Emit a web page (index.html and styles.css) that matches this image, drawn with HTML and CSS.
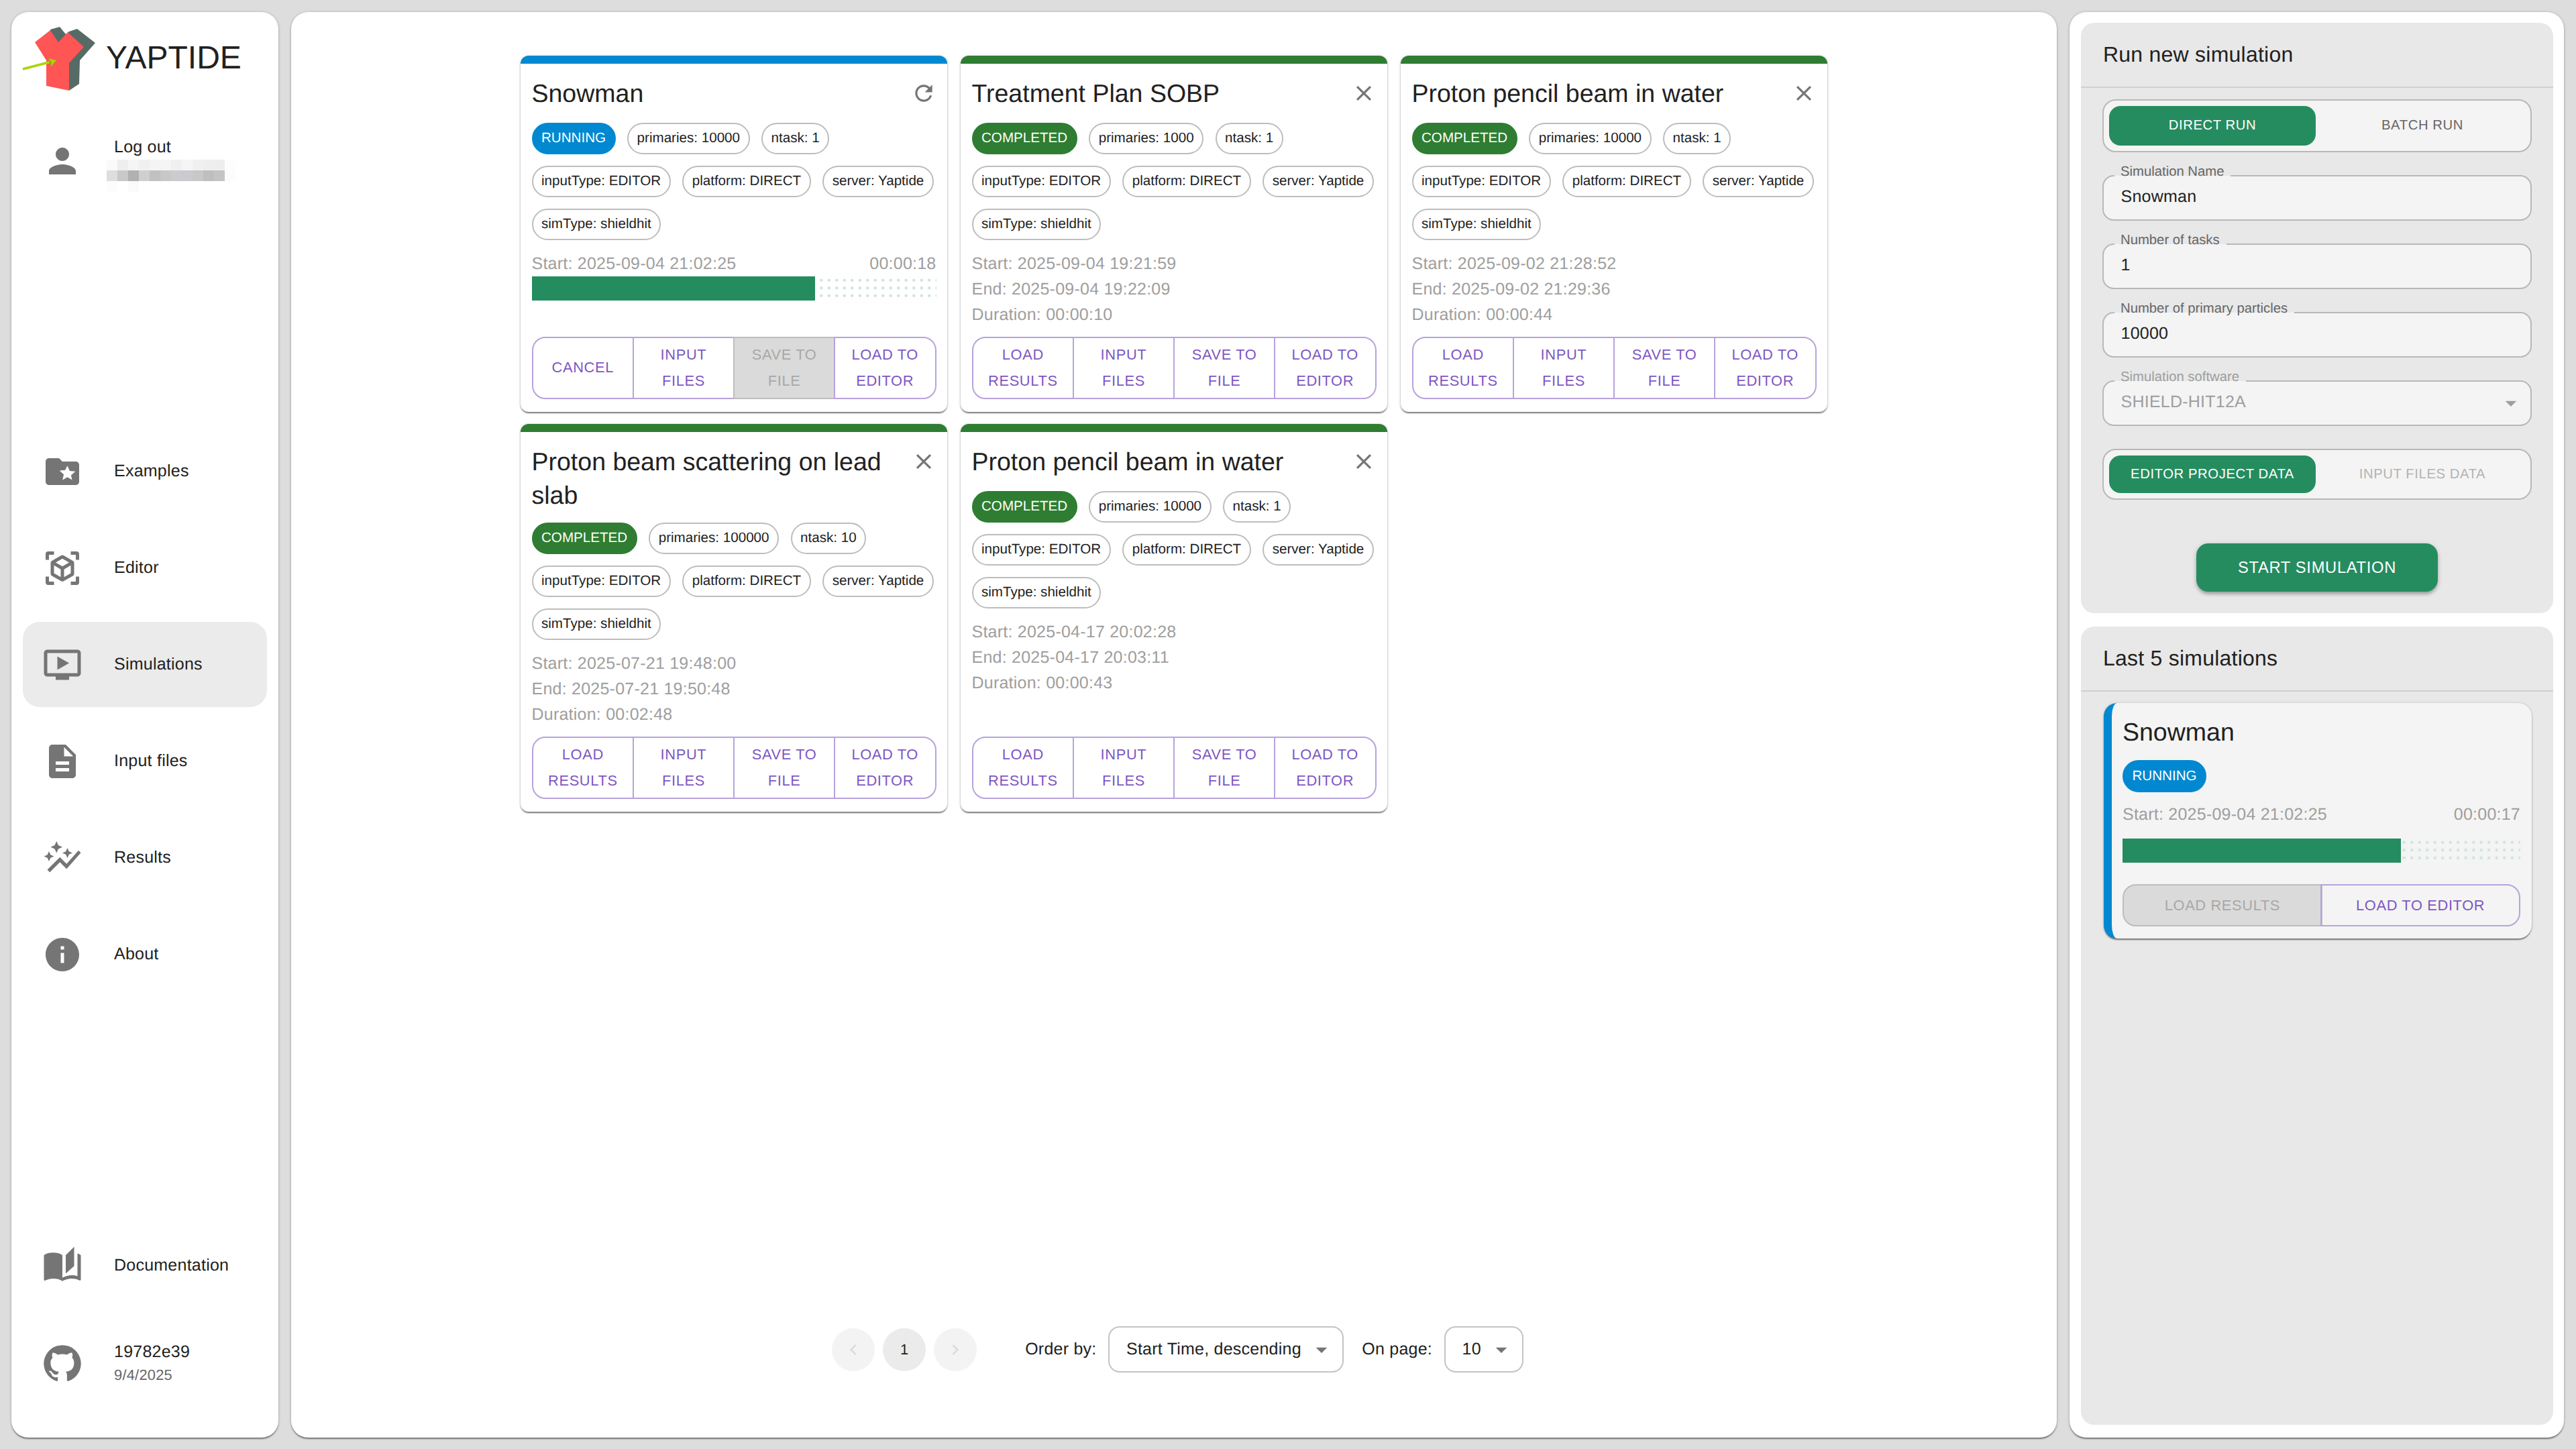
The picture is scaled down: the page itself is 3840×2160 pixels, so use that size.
FILE: index.html
```html
<!DOCTYPE html>
<html lang="en">
<head>
  <meta charset="UTF-8" />
  <title>YAPTIDE</title>
  <link rel="stylesheet" href="styles.css">
</head>
<body>
  <div class="app">

    <aside class="side">
      <div class="side-top">
        <div class="brand">
          <svg class="logo" viewBox="30 36 115 104">
            <polygon fill="#566b66" points="75,44 89,40 98,51 103,47 115,43 142,64 119,90 118,125 103,135 90,100 75,50" />
            <polygon fill="#ff5555" points="52,63 75,45 87,63 101,48 125,70 103,94 103,135 69,128 69,90" />
            <line x1="34" y1="103" x2="76" y2="92" stroke="#a8d600" stroke-width="3.5" />
            <polygon fill="#a8d600" points="72,87 84,90 76,99" />
            <polygon fill="#7f9e00" points="72,87 76,92 76,99" />
          </svg>
          <span class="brand-name">YAPTIDE</span>
        </div>
        <a class="nav-item user-item">
          <svg class="nav-icon" viewBox="0 0 24 24"><path d="M12 12c2.21 0 4-1.79 4-4s-1.79-4-4-4-4 1.79-4 4 1.79 4 4 4zm0 2c-2.67 0-8 1.34-8 4v2h16v-2c0-2.66-5.33-4-8-4z" /></svg>
          <div class="nav-text">
            <div>Log out</div>
            <svg class="mosaic" viewBox="0 0 12 3" shape-rendering="crispEdges">
              <rect x="0" y="0" width="1" height="1" fill="#fafafa" /><rect x="1" y="0" width="1" height="1" fill="#eeeeee" /><rect x="2" y="0" width="1" height="1" fill="#f5f5f5" /><rect x="3" y="0" width="1" height="1" fill="#f0f0f0" /><rect x="4" y="0" width="1" height="1" fill="#f4f4f4" /><rect x="5" y="0" width="1" height="1" fill="#f5f5f5" /><rect x="6" y="0" width="1" height="1" fill="#f0f0f0" /><rect x="7" y="0" width="1" height="1" fill="#f5f5f5" /><rect x="8" y="0" width="1" height="1" fill="#f0f0f0" /><rect x="9" y="0" width="1" height="1" fill="#eeeeee" /><rect x="10" y="0" width="1" height="1" fill="#eeeeee" /><rect x="11" y="0" width="1" height="1" fill="#fdfdfd" />
              <rect x="0" y="1" width="1" height="1" fill="#dfdedd" /><rect x="1" y="1" width="1" height="1" fill="#c8caca" /><rect x="2" y="1" width="1" height="1" fill="#b1b1b1" /><rect x="3" y="1" width="1" height="1" fill="#d0cfcc" /><rect x="4" y="1" width="1" height="1" fill="#c2c0c1" /><rect x="5" y="1" width="1" height="1" fill="#c8c8c8" /><rect x="6" y="1" width="1" height="1" fill="#cccccc" /><rect x="7" y="1" width="1" height="1" fill="#c9cbd0" /><rect x="8" y="1" width="1" height="1" fill="#c8c8c8" /><rect x="9" y="1" width="1" height="1" fill="#c0bfbf" /><rect x="10" y="1" width="1" height="1" fill="#c4c4c4" /><rect x="11" y="1" width="1" height="1" fill="#fbfcfd" />
              <rect x="0" y="2" width="1" height="1" fill="#fcfcfc" /><rect x="2" y="2" width="1" height="1" fill="#fafafa" />
            </svg>
          </div>
        </a>
      </div>

      <nav class="nav-group">
        <a class="nav-item">
          <svg class="nav-icon" viewBox="0 0 24 24"><path d="M20 6h-8l-2-2H4c-1.1 0-1.99.9-1.99 2L2 18c0 1.1.9 2 2 2h16c1.1 0 2-.9 2-2V8c0-1.1-.9-2-2-2zm-2.06 11L15 15.28 12.06 17l.78-3.33-2.59-2.24 3.41-.29L15 8.5l1.34 3.14 3.41.29-2.59 2.24.78 3.33z" /></svg>
          <span>Examples</span>
        </a>
        <a class="nav-item">
          <svg class="nav-icon" viewBox="0 0 24 24"><path d="M18.25 7.6l-5.5-3.18c-.46-.27-1.04-.27-1.5 0L5.75 7.6c-.46.27-.75.76-.75 1.3v6.35c0 .54.29 1.03.75 1.3l5.5 3.18c.46.27 1.04.27 1.5 0l5.5-3.18c.46-.27.75-.76.75-1.3V8.9c0-.54-.29-1.03-.75-1.3zM7 14.96v-4.62l4 2.32v4.61l-4-2.31zm5-4.03L8 8.61l4-2.31 4 2.31-4 2.32zm1 6.34v-4.61l4-2.32v4.62l-4 2.31zM7 2H3.5C2.67 2 2 2.67 2 3.5V7h2V4h3V2zm10 0h3.5c.83 0 1.5.67 1.5 1.5V7h-2V4h-3V2zM7 22H3.5c-.83 0-1.5-.67-1.5-1.5V17h2v3h3v2zm10 0h3.5c.83 0 1.5-.67 1.5-1.5V17h-2v3h-3v2z" /></svg>
          <span>Editor</span>
        </a>
        <a class="nav-item active">
          <svg class="nav-icon" viewBox="0 0 24 24"><path d="M21 3H3c-1.11 0-2 .89-2 2v12c0 1.1.89 2 2 2h5v2h8v-2h5c1.1 0 1.99-.9 1.99-2L23 5c0-1.11-.9-2-2-2zm0 14H3V5h18v12zm-5-6l-7 4V7z" /></svg>
          <span>Simulations</span>
        </a>
        <a class="nav-item">
          <svg class="nav-icon" viewBox="0 0 24 24"><path d="M14 2H6c-1.1 0-1.99.9-1.99 2L4 20c0 1.1.89 2 1.99 2H18c1.1 0 2-.9 2-2V8l-6-6zm2 16H8v-2h8v2zm0-4H8v-2h8v2zm-3-5V3.5L18.5 9H13z" /></svg>
          <span>Input files</span>
        </a>
        <a class="nav-item">
          <svg class="nav-icon" viewBox="0 0 24 24"><path d="M14.06 9.94 12 9l2.06-.94L15 6l.94 2.06L18 9l-2.06.94L15 12l-.94-2.06zM4 14l.94-2.06L7 11l-2.06-.94L4 8l-.94 2.06L1 11l2.06.94L4 14zm4.5-5 1.09-2.41L12 5.5l-2.41-1.09L8.5 2 7.41 4.41 5 5.5l2.41 1.09L8.5 9zm-4 11.5 6-6.01 4 4L23 8.93l-1.41-1.41-7.09 7.97-4-4L3 19l1.5 1.5z" /></svg>
          <span>Results</span>
        </a>
        <a class="nav-item">
          <svg class="nav-icon" viewBox="0 0 24 24"><path d="M12 2C6.48 2 2 6.48 2 12s4.48 10 10 10 10-4.48 10-10S17.52 2 12 2zm1 15h-2v-6h2v6zm0-8h-2V7h2v2z" /></svg>
          <span>About</span>
        </a>
      </nav>

      <nav class="nav-group nav-bottom">
        <a class="nav-item">
          <svg class="nav-icon" viewBox="0 0 24 24"><path d="M19 1l-5 5v11l5-4.5V1zM1 6v14.65c0 .25.25.5.5.5.1 0 .15-.05.25-.05C3.1 20.45 5.05 20 6.5 20c1.95 0 4.05.4 5.5 1.5V6c-1.45-1.1-3.55-1.5-5.5-1.5S2.45 4.9 1 6zm22 13.5V6c-.6-.45-1.25-.75-2-1v13.5c-1.1-.35-2.3-.5-3.5-.5-1.7 0-4.15.65-5.5 1.5v2c1.35-.85 3.8-1.5 5.5-1.5 1.65 0 3.35.3 4.75 1.05.1.05.15.05.25.05.25 0 .5-.25.5-.5v-1.1z" /></svg>
          <span>Documentation</span>
        </a>
        <a class="nav-item">
          <svg class="nav-icon" viewBox="0 0 24 24"><path d="M12 1.27a11 11 0 00-3.48 21.46c.55.09.73-.28.73-.55v-1.84c-3.03.64-3.67-1.46-3.67-1.46-.55-1.29-1.28-1.65-1.28-1.65-.92-.65.1-.65.1-.65 1.1 0 1.73 1.1 1.73 1.1.92 1.65 2.57 1.2 3.21.92a2 2 0 01.64-1.47c-2.47-.27-5.04-1.19-5.04-5.5 0-1.1.46-2.1 1.2-2.84a3.76 3.76 0 010-2.93s.91-.28 3.11 1.1c1.8-.49 3.7-.49 5.5 0 2.1-1.38 3.02-1.1 3.02-1.1a3.76 3.76 0 010 2.93c.83.74 1.2 1.74 1.2 2.94 0 4.21-2.57 5.13-5.04 5.4.45.37.82.92.82 2.02v3.03c0 .27.1.64.73.55A11 11 0 0012 1.27" /></svg>
          <div class="nav-text">
            <div>19782e39</div>
            <div class="nav-sub">9/4/2025</div>
          </div>
        </a>
      </nav>
    </aside>

    <main class="main">
      <section class="cards">

        <article class="card card-running">
          <header class="card-head">
            <h2 class="card-title">Snowman</h2>
            <svg class="card-action" viewBox="0 0 24 24"><path d="M17.65 6.35C16.2 4.9 14.21 4 12 4c-4.42 0-7.99 3.58-7.99 8s3.57 8 7.99 8c3.73 0 6.84-2.55 7.73-6h-2.08c-.82 2.33-3.04 4-5.65 4-3.31 0-6-2.69-6-6s2.69-6 6-6c1.66 0 3.14.69 4.22 1.78L13 11h7V4z" /></svg>
          </header>
          <div class="chips">
            <span class="chip chip-blue">RUNNING</span>
            <span class="chip">primaries: 10000</span>
            <span class="chip">ntask: 1</span>
            <span class="chip">inputType: EDITOR</span>
            <span class="chip">platform: DIRECT</span>
            <span class="chip">server: Yaptide</span>
            <span class="chip">simType: shieldhit</span>
          </div>
          <div class="meta meta-row"><span>Start: 2025-09-04 21:02:25</span><span>00:00:18</span></div>
          <div class="progress"><div class="progress-fill" style="width: 70%"></div></div>
          <div class="btn-group">
            <button class="btn">CANCEL</button>
            <button class="btn">INPUT FILES</button>
            <button class="btn" disabled>SAVE TO FILE</button>
            <button class="btn">LOAD TO EDITOR</button>
          </div>
        </article>

        <article class="card">
          <header class="card-head">
            <h2 class="card-title">Treatment Plan SOBP</h2>
            <svg class="card-action" viewBox="0 0 24 24"><path d="M19 6.41 17.59 5 12 10.59 6.41 5 5 6.41 10.59 12 5 17.59 6.41 19 12 13.41 17.59 19 19 17.59 13.41 12z" /></svg>
          </header>
          <div class="chips">
            <span class="chip chip-green">COMPLETED</span>
            <span class="chip">primaries: 1000</span>
            <span class="chip">ntask: 1</span>
            <span class="chip">inputType: EDITOR</span>
            <span class="chip">platform: DIRECT</span>
            <span class="chip">server: Yaptide</span>
            <span class="chip">simType: shieldhit</span>
          </div>
          <div class="meta">
            <div>Start: 2025-09-04 19:21:59</div>
            <div>End: 2025-09-04 19:22:09</div>
            <div>Duration: 00:00:10</div>
          </div>
          <div class="btn-group">
            <button class="btn">LOAD RESULTS</button>
            <button class="btn">INPUT FILES</button>
            <button class="btn">SAVE TO FILE</button>
            <button class="btn">LOAD TO EDITOR</button>
          </div>
        </article>

        <article class="card">
          <header class="card-head">
            <h2 class="card-title">Proton pencil beam in water</h2>
            <svg class="card-action" viewBox="0 0 24 24"><path d="M19 6.41 17.59 5 12 10.59 6.41 5 5 6.41 10.59 12 5 17.59 6.41 19 12 13.41 17.59 19 19 17.59 13.41 12z" /></svg>
          </header>
          <div class="chips">
            <span class="chip chip-green">COMPLETED</span>
            <span class="chip">primaries: 10000</span>
            <span class="chip">ntask: 1</span>
            <span class="chip">inputType: EDITOR</span>
            <span class="chip">platform: DIRECT</span>
            <span class="chip">server: Yaptide</span>
            <span class="chip">simType: shieldhit</span>
          </div>
          <div class="meta">
            <div>Start: 2025-09-02 21:28:52</div>
            <div>End: 2025-09-02 21:29:36</div>
            <div>Duration: 00:00:44</div>
          </div>
          <div class="btn-group">
            <button class="btn">LOAD RESULTS</button>
            <button class="btn">INPUT FILES</button>
            <button class="btn">SAVE TO FILE</button>
            <button class="btn">LOAD TO EDITOR</button>
          </div>
        </article>

        <article class="card">
          <header class="card-head">
            <h2 class="card-title">Proton beam scattering on lead slab</h2>
            <svg class="card-action" viewBox="0 0 24 24"><path d="M19 6.41 17.59 5 12 10.59 6.41 5 5 6.41 10.59 12 5 17.59 6.41 19 12 13.41 17.59 19 19 17.59 13.41 12z" /></svg>
          </header>
          <div class="chips">
            <span class="chip chip-green">COMPLETED</span>
            <span class="chip">primaries: 100000</span>
            <span class="chip">ntask: 10</span>
            <span class="chip">inputType: EDITOR</span>
            <span class="chip">platform: DIRECT</span>
            <span class="chip">server: Yaptide</span>
            <span class="chip">simType: shieldhit</span>
          </div>
          <div class="meta">
            <div>Start: 2025-07-21 19:48:00</div>
            <div>End: 2025-07-21 19:50:48</div>
            <div>Duration: 00:02:48</div>
          </div>
          <div class="btn-group">
            <button class="btn">LOAD RESULTS</button>
            <button class="btn">INPUT FILES</button>
            <button class="btn">SAVE TO FILE</button>
            <button class="btn">LOAD TO EDITOR</button>
          </div>
        </article>

        <article class="card">
          <header class="card-head">
            <h2 class="card-title">Proton pencil beam in water</h2>
            <svg class="card-action" viewBox="0 0 24 24"><path d="M19 6.41 17.59 5 12 10.59 6.41 5 5 6.41 10.59 12 5 17.59 6.41 19 12 13.41 17.59 19 19 17.59 13.41 12z" /></svg>
          </header>
          <div class="chips">
            <span class="chip chip-green">COMPLETED</span>
            <span class="chip">primaries: 10000</span>
            <span class="chip">ntask: 1</span>
            <span class="chip">inputType: EDITOR</span>
            <span class="chip">platform: DIRECT</span>
            <span class="chip">server: Yaptide</span>
            <span class="chip">simType: shieldhit</span>
          </div>
          <div class="meta">
            <div>Start: 2025-04-17 20:02:28</div>
            <div>End: 2025-04-17 20:03:11</div>
            <div>Duration: 00:00:43</div>
          </div>
          <div class="btn-group">
            <button class="btn">LOAD RESULTS</button>
            <button class="btn">INPUT FILES</button>
            <button class="btn">SAVE TO FILE</button>
            <button class="btn">LOAD TO EDITOR</button>
          </div>
        </article>

      </section>

      <footer class="pager">
        <div class="pages">
          <span class="page page-off"><svg viewBox="0 0 24 24"><path d="M15.41 7.41 14 6l-6 6 6 6 1.41-1.41L10.83 12z" /></svg></span>
          <span class="page page-on">1</span>
          <span class="page page-off"><svg viewBox="0 0 24 24"><path d="M10 6 8.59 7.41 13.17 12l-4.58 4.59L10 18l6-6z" /></svg></span>
        </div>
        <span class="pager-label first-label">Order by:</span>
        <div class="pager-select">
          <span>Start Time, descending</span>
          <svg class="drop" viewBox="0 0 24 24"><path d="M7 10l5 5 5-5z" /></svg>
        </div>
        <span class="pager-label">On page:</span>
        <div class="pager-select">
          <span>10</span>
          <svg class="drop" viewBox="0 0 24 24"><path d="M7 10l5 5 5-5z" /></svg>
        </div>
      </footer>
    </main>

    <aside class="right">
      <section class="box box-run">
        <h3 class="box-title">Run new simulation</h3>
        <div class="box-body">
          <div class="toggle">
            <span class="toggle-opt on">DIRECT RUN</span>
            <span class="toggle-opt">BATCH RUN</span>
          </div>
          <div class="field">
            <label class="field-label">Simulation Name</label>
            <span>Snowman</span>
          </div>
          <div class="field">
            <label class="field-label">Number of tasks</label>
            <span>1</span>
          </div>
          <div class="field">
            <label class="field-label">Number of primary particles</label>
            <span>10000</span>
          </div>
          <div class="field field-off">
            <label class="field-label">Simulation software</label>
            <span>SHIELD-HIT12A</span>
            <svg class="drop" viewBox="0 0 24 24"><path d="M7 10l5 5 5-5z" /></svg>
          </div>
          <div class="toggle toggle-small">
            <span class="toggle-opt on">EDITOR PROJECT DATA</span>
            <span class="toggle-opt off">INPUT FILES DATA</span>
          </div>
          <button class="start">START SIMULATION</button>
        </div>
      </section>

      <section class="box box-last">
        <h3 class="box-title">Last 5 simulations</h3>
        <div class="box-body">
          <article class="mini">
            <h2 class="card-title">Snowman</h2>
            <div class="chips"><span class="chip chip-blue">RUNNING</span></div>
            <div class="meta meta-row"><span>Start: 2025-09-04 21:02:25</span><span>00:00:17</span></div>
            <div class="progress"><div class="progress-fill" style="width: 70%"></div></div>
            <div class="btn-group">
              <button class="btn" disabled>LOAD RESULTS</button>
              <button class="btn">LOAD TO EDITOR</button>
            </div>
          </article>
        </div>
      </section>
    </aside>

  </div>
</body>
</html>
```

FILE: styles.css
```css
* { box-sizing: border-box; }
html, body { margin: 0; height: 100%; }
body { background: #dddddd; color: #212121; font-family: "Liberation Sans", Arial, sans-serif; font-size: 25px; letter-spacing: .234px; text-rendering: geometricPrecision; }
h2, h3 { margin: 0; font-weight: 400; }

.app { display: flex; gap: 19px; height: 2160px; padding: 18px 18px 17px 17px; }
.side, .main, .right { background: #fff; border-radius: 25px; box-shadow: 0 3px 2px -1px rgba(0,0,0,.35), 0 1px 3px rgba(0,0,0,.25), 0 0 5px rgba(0,0,0,.1); }

/* left nav */
.side { width: 398px; flex: none; display: flex; flex-direction: column; justify-content: space-between; padding-bottom: 48px; }
.brand { display: flex; align-items: center; gap: 13px; padding: 18px 0 0 13px; }
.logo { width: 115px; height: 104px; flex: none; }
.brand-name { font-size: 48px; letter-spacing: 0; margin-top: -4px; }
.nav-group { display: flex; flex-direction: column; gap: 17px; }
.nav-bottom { gap: 18.5px; }
.nav-item { display: flex; align-items: center; height: 127px; margin: 0 17px; padding-left: 29px; gap: 47px; border-radius: 25px; }
.nav-item.active { background: #ebebeb; }
.nav-icon { width: 60px; height: 60px; flex: none; fill: #757575; }
.user-item { margin-top: 36px; }
.nav-sub { font-size: 21.875px; letter-spacing: .23px; color: #666; margin-top: 7px; }
.mosaic { display: block; width: 192px; height: 48px; margin: 3.5px 0 -11.5px -11px; }

/* main area */
.main { flex: 1; display: flex; flex-direction: column; justify-content: space-between; padding: 65px 0 97px; }
.cards { display: grid; grid-template-columns: repeat(3, 636px); gap: 18.5px 20px; justify-content: center; align-content: start; }
.card { display: flex; flex-direction: column; background: #fff; border-radius: 12px; border-top: 12.5px solid #2e7d32; padding: 18.5px 16.5px 18.5px; box-shadow: 0 3px 2px -1px rgba(0,0,0,.4), 0 1px 3px rgba(0,0,0,.25), 0 0 4px rgba(0,0,0,.12); }
.card-running { border-top-color: #0288d1; }
.card-head { display: flex; justify-content: space-between; align-items: flex-start; gap: 20px; min-height: 53px; }
.card-title { font-size: 37.5px; line-height: 50px; letter-spacing: 0; }
.card-action { width: 38px; height: 38px; flex: none; fill: #757575; margin-top: 6px; }

.chips { display: flex; flex-wrap: wrap; gap: 16.5px 17.5px; margin-top: 16px; }
.chip { display: inline-flex; align-items: center; height: 47.5px; padding: 0 12.5px; border: 2.5px solid #bdbdbd; border-radius: 24px; font-size: 20.6px; letter-spacing: 0; white-space: nowrap; }
.chip-blue { background: #0288d1; border-color: #0288d1; color: #fff; }
.chip-green { background: #2e7d32; border-color: #2e7d32; color: #fff; }

.meta { margin: 16px 0 14px; color: #9e9e9e; line-height: 38px; }
.meta-row { display: flex; justify-content: space-between; margin-bottom: 0; }

.progress { height: 36px; background-image: radial-gradient(circle, #cfe6db 2px, transparent 2.6px); background-size: 11.5px 11.5px; }
.progress-fill { height: 100%; background: #258c60; }

.btn-group { display: flex; margin-top: auto; }
.btn { flex: 1 1 0; min-width: 0; margin-left: -2.5px; padding: 6.25px 18px; background: none; border: 2.5px solid #b7a3dd; color: #7e57c2; font: inherit; font-size: 21.875px; line-height: 38.3px; letter-spacing: .625px; }
.btn:first-child { margin-left: 0; border-radius: 20px 0 0 20px; }
.btn:last-child { border-radius: 0 20px 20px 0; }
.btn:disabled { background: #dadada; border-color: #bdbdbd; color: #a8a8a8; }

/* pagination */
.pager { display: flex; align-items: center; justify-content: center; padding-left: 11px; }
.pages { display: flex; gap: 12px; }
.page { display: flex; align-items: center; justify-content: center; width: 64px; height: 64px; border-radius: 50%; font-size: 21.875px; }
.page-off { background: #f3f3f3; }
.page-off svg { width: 32px; height: 32px; fill: #dcdcdc; }
.page-on { background: #ebebeb; }
.pager-label { margin: 0 17.5px 0 27.5px; }
.first-label { margin-left: 72px; }
.pager-select { display: flex; align-items: center; gap: 10px; height: 69px; padding: 0 11px 0 25px; border: 2.5px solid #c4c4c4; border-radius: 17px; }
.drop { width: 40px; height: 40px; flex: none; fill: #757575; }

/* right column */
.right { width: 737px; flex: none; display: flex; flex-direction: column; gap: 20px; padding: 16px 16px 19px 17px; }
.box { background: #e8e8e8; border-radius: 20px; }
.box-last { flex: 1; }
.box-title { height: 97px; padding: 30px 32px 0 33px; font-size: 32px; line-height: 34px; border-bottom: 2.5px solid #cfcfcf; }
.box-body { display: flex; flex-direction: column; padding: 17px 32px 32px; }

.toggle { display: flex; height: 79px; padding: 8px 2px 8px 8px; background: #f4f4f4; border: 2.5px solid #b8b8b8; border-radius: 20px; }
.toggle-opt { flex: 1; display: flex; align-items: center; justify-content: center; border-radius: 17px; font-size: 20.3px; letter-spacing: .58px; color: #666; }
.toggle-opt.on { flex: 0 0 308px; background: #258c60; color: #fff; }
.toggle-opt.off { color: #b3b3b3; }
.toggle-small { height: 76px; margin-top: 34px; }

.field { position: relative; display: flex; align-items: center; justify-content: space-between; height: 68px; margin-top: 34px; padding: 0 0 3px 25.5px; background: #f4f4f4; border: 2.5px solid #b8b8b8; border-radius: 17px; }
.field-label { position: absolute; left: 16px; top: -19px; padding: 0 10px 0 9px; font-size: 20.3px; line-height: 24px; letter-spacing: 0; color: #666; background: linear-gradient(#e8e8e8 0 76%, #f4f4f4 76%); }
.field-off, .field-off .field-label { color: #9e9e9e; }
.field-off .drop { fill: #9e9e9e; margin-right: 9.5px; margin-top: 3px; }

.start { align-self: center; width: 360px; height: 72px; margin-top: 65px; background: #258c60; color: #fff; border: 0; border-radius: 18px; font: inherit; font-size: 23.75px; letter-spacing: .68px; box-shadow: 0 5px 5px -2px rgba(0,0,0,.2), 0 3px 6px rgba(0,0,0,.14), 0 1px 10px rgba(0,0,0,.1); }

.mini { display: flex; flex-direction: column; height: 351px; margin-left: 2px; padding: 18px 17px 18px 16px; background: #f4f4f4; border-left: 12px solid #0288d1; border-radius: 20px; box-shadow: 0 3px 2px -1px rgba(0,0,0,.4), 0 1px 3px rgba(0,0,0,.2), 0 0 4px rgba(0,0,0,.1); }
.mini .chips { margin-top: 17px; }
.mini .meta { margin-top: 14.5px; }
.mini .progress { margin-top: 17px; }
.mini .btn { padding: 0; line-height: 59px; }
```
